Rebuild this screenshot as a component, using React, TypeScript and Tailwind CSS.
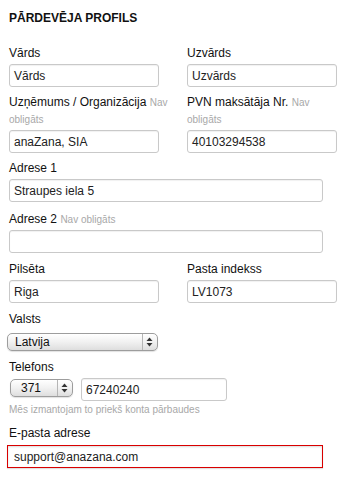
import React from 'react';

const Optional: React.FC<{ children?: React.ReactNode }> = ({ children = 'Nav obligāts' }) => (
  <span className="text-[10px] text-[#a8a8a8]">{children}</span>
);

const Field: React.FC<{ label: React.ReactNode; value?: string; width?: string; className?: string }> = ({
  label,
  value = '',
  width = 'w-[150px]',
  className = 'mb-[7px]',
}) => (
  <div className={className}>
    <div className="mb-[2px] text-[12px] leading-[17px] text-[#111]">{label}</div>
    <div
      className={`${width} flex h-[23px] items-center rounded-[3px] border border-[#c9c9c9] bg-white pl-[4px] text-[12px] text-[#222] shadow-[inset_0_1px_1px_rgba(0,0,0,0.06)]`}
    >
      {value}
    </div>
  </div>
);

const Arrows: React.FC = () => (
  <svg width="7" height="10" viewBox="0 0 7 10">
    <path d="M3.5 0.5 L6.5 4 L0.5 4 Z" fill="#333" />
    <path d="M3.5 9.5 L6.5 6 L0.5 6 Z" fill="#333" />
  </svg>
);

const FakeSelect: React.FC<{ value: string; width: string; textPad: string; sepRight: string }> = ({
  value,
  width,
  textPad,
  sepRight,
}) => (
  <div
    className={`${width} relative flex h-[18px] items-center rounded-[5px] border border-[#9d9d9d] bg-gradient-to-b from-[#ffffff] via-[#f1f1f1] to-[#dedede] text-[12px] text-[#111] shadow-[0_1px_1px_rgba(0,0,0,0.12)] ${textPad}`}
  >
    {value}
    <div className={`absolute top-0 bottom-0 ${sepRight} flex items-center border-l border-[#b5b5b5] pl-[3px]`}>
      <Arrows />
    </div>
  </div>
);

// label whose "Nav obligāts" note breaks after "Nav", as in the original form
const SplitLabel: React.FC<{ text: string }> = ({ text }) => (
  <>
    <span className="whitespace-nowrap">
      {text} <Optional>Nav</Optional>
    </span>
    <br />
    <Optional>obligāts</Optional>
  </>
);

export default function App() {
  return (
    <div className="h-[488px] w-[345px] bg-white pl-[9px] pt-[10px] font-['Liberation_Sans',Arial,sans-serif]">
      <h1 className="mb-[18px] text-[12px] font-bold leading-[17px] text-[#111]">PĀRDEVĒJA PROFILS</h1>

      <div className="grid grid-cols-[150px_150px] gap-x-[28px]">
        <Field label="Vārds" value="Vārds" />
        <Field label="Uzvārds" value="Uzvārds" />
        <Field label={<SplitLabel text="Uzņēmums / Organizācija" />} value="anaZana, SIA" />
        <Field label={<SplitLabel text="PVN maksātāja Nr." />} value="40103294538" />
      </div>

      <Field label="Adrese 1" value="Straupes iela 5" width="w-[314px]" className="mb-[9px]" />
      <Field
        label={
          <>
            Adrese 2 <Optional />
          </>
        }
        width="w-[314px]"
        className="mb-[8px]"
      />

      <div className="grid grid-cols-[150px_150px] gap-x-[28px]">
        <Field label="Pilsēta" value="Riga" className="mb-[8px]" />
        <Field label="Pasta indekss" value="LV1073" className="mb-[8px]" />
      </div>

      <div className="mb-[8px]">
        <div className="mb-[5px] text-[12px] leading-[17px] text-[#111]">Valsts</div>
        <div className="-ml-[2px]">
          <FakeSelect value="Latvija" width="w-[151px]" textPad="pl-[7px]" sepRight="right-[4px]" />
        </div>
      </div>

      <div>
        <div className="mb-[2px] text-[12px] leading-[17px] text-[#111]">Telefons</div>
        <div className="flex items-start gap-[8px]">
          <div className="mt-[1px] ml-[1px]">
            <FakeSelect value="371" width="w-[63px]" textPad="pl-[10px]" sepRight="right-[4px]" />
          </div>
          <div className="flex h-[23px] w-[146px] items-center rounded-[3px] border border-[#c9c9c9] bg-white pl-[4px] text-[12px] text-[#222] shadow-[inset_0_1px_1px_rgba(0,0,0,0.06)]">
            67240240
          </div>
        </div>
        <div className="mt-[2px] text-[10px] leading-[13px] text-[#a8a8a8]">Mēs izmantojam to priekš konta pārbaudes</div>
      </div>

      <div className="mt-[9px]">
        <div className="mb-[3px] text-[12px] leading-[17px] text-[#111]">E-pasta adrese</div>
        <div className="-ml-[2px] flex h-[23px] w-[316px] items-center border border-[#d90000] bg-white pl-[6px] text-[12px] text-[#222] shadow-[inset_0_1px_2px_rgba(0,0,0,0.15),0_1px_1px_rgba(0,0,0,0.12)]">
          support@anazana.com
        </div>
      </div>
    </div>
  );
}
